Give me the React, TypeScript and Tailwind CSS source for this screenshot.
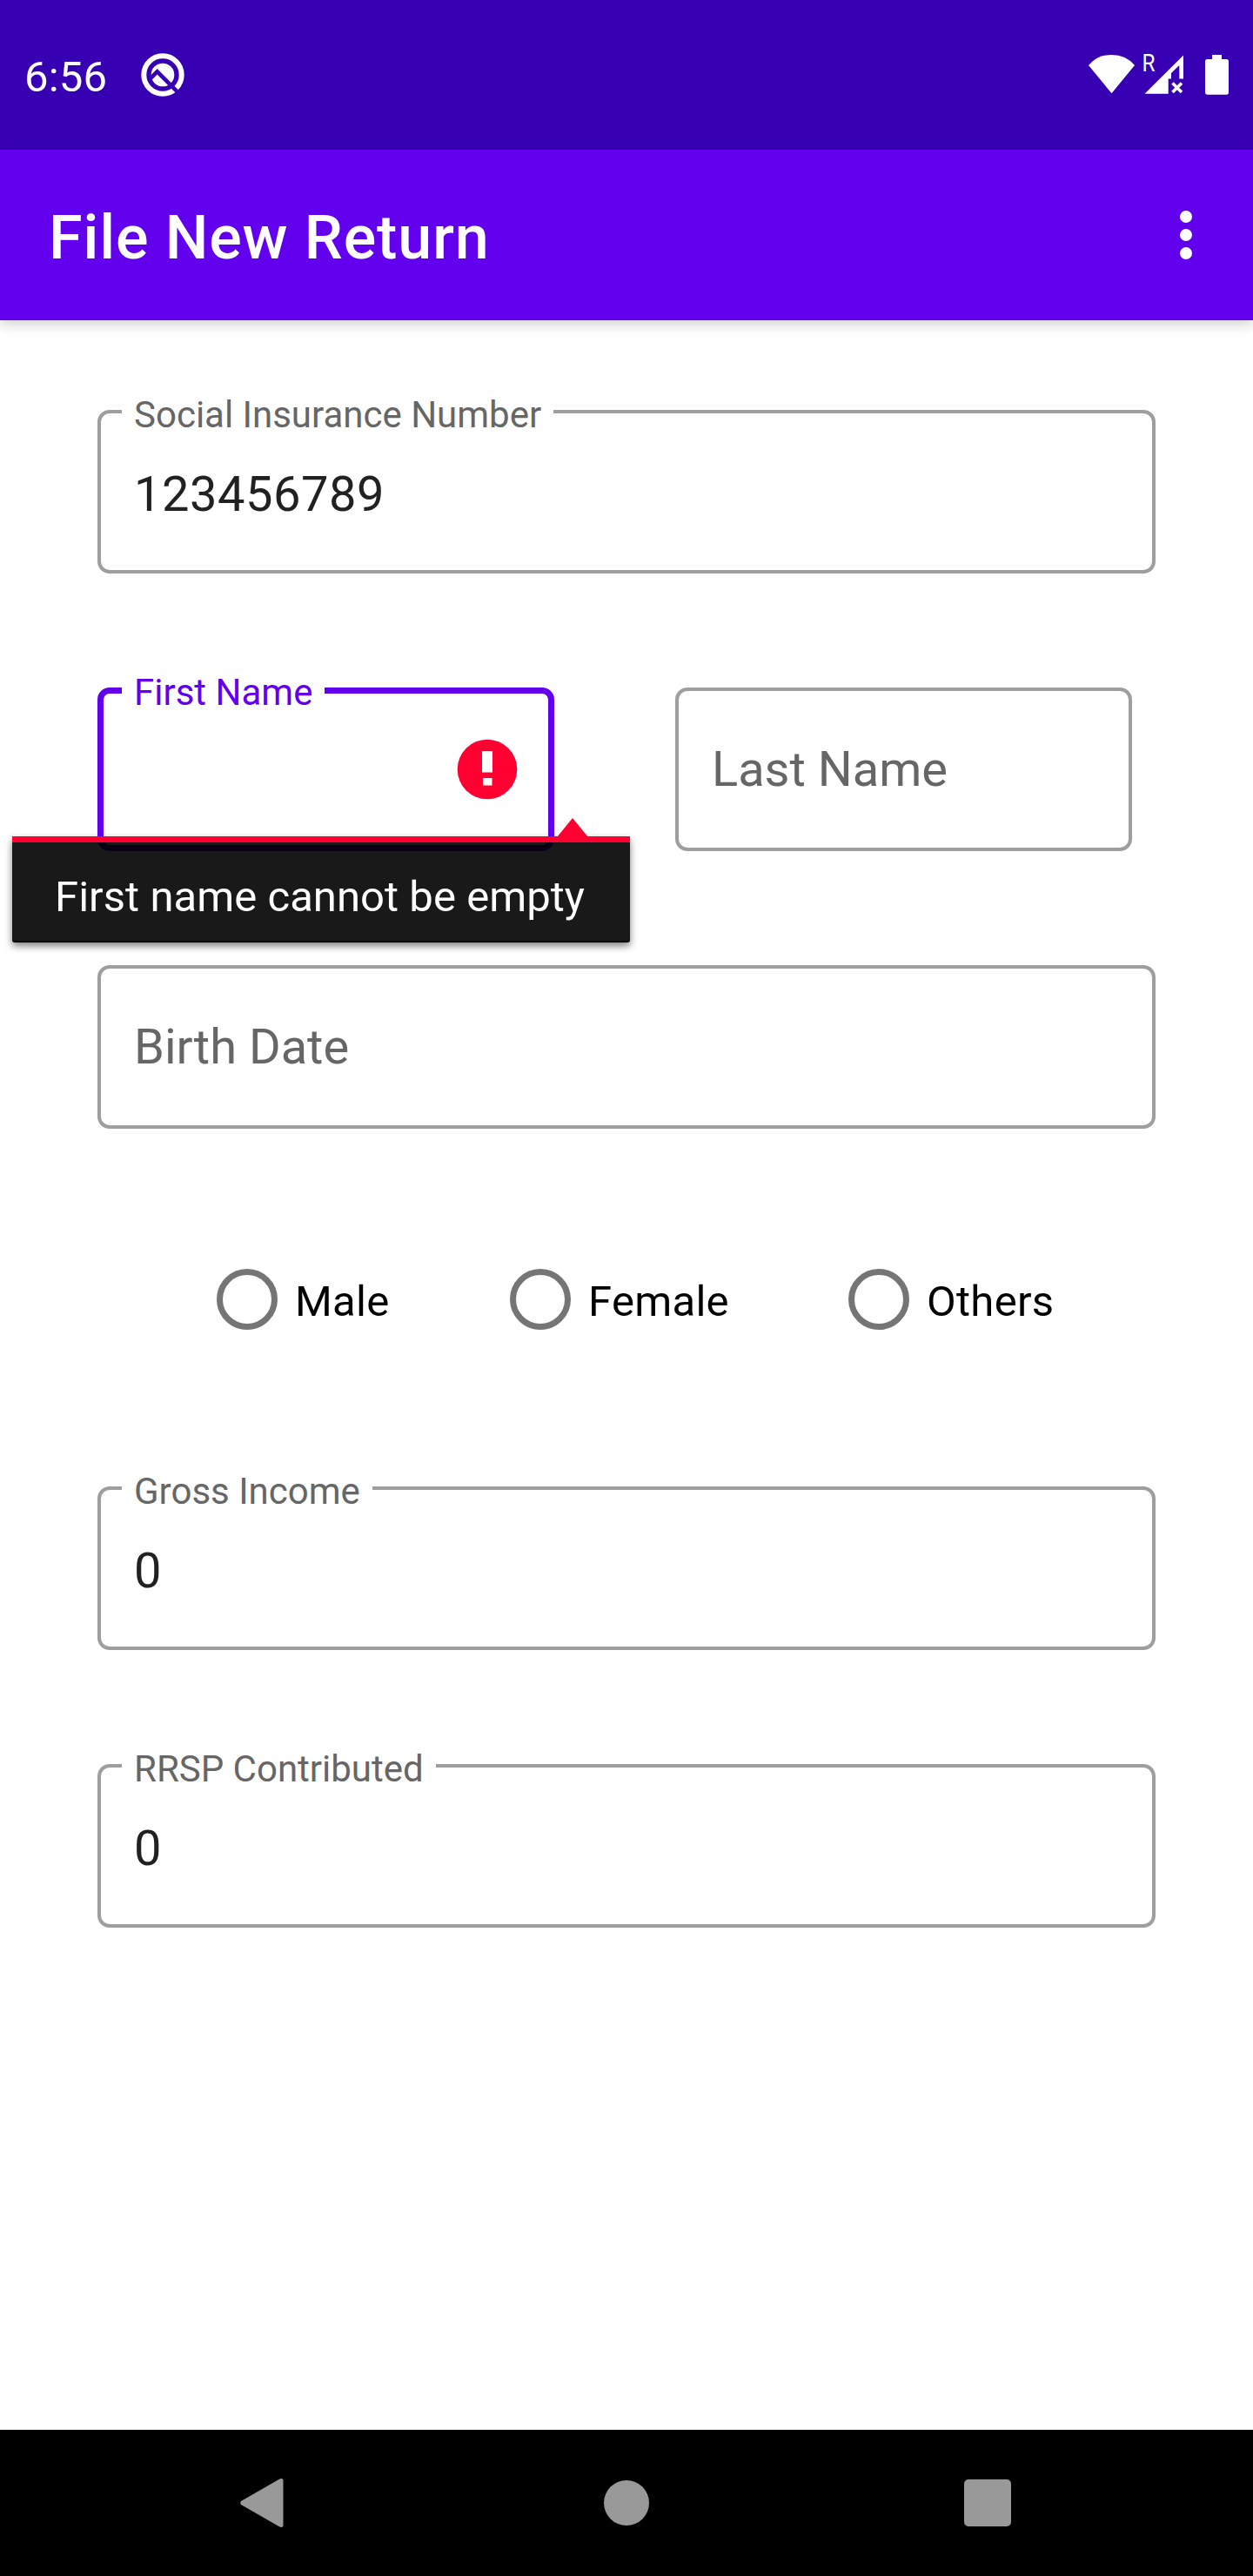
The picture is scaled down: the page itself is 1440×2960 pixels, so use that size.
import React from 'react';

type FieldProps = {
  label: string;
  value?: string;
  focused?: boolean;
  className?: string;
  children?: React.ReactNode;
};

/* Outlined text field: a fieldset leaves the notch in its border for the floating label. */
function Field({ label, value, focused, className = '', children }: FieldProps) {
  const floating = focused || value !== undefined;
  return (
    <div className={'relative h-[188px] ' + className}>
      <fieldset
        className={
          'absolute inset-x-0 bottom-0 rounded-[14px] ' +
          (focused ? 'border-[7px] border-[#6200ee] pl-[21px] ' : 'border-4 border-[#9e9e9e] pl-[24px] ') +
          (floating ? (focused ? 'top-[-21px]' : 'top-[-23px]') : 'top-0')
        }
      >
        {floating && (
          <legend
            className={
              'h-[49px] px-[14px] text-[42px] leading-[49px] whitespace-nowrap ' +
              (focused ? 'text-[#6200ee]' : 'text-[#666666]')
            }
          >
            <span className={'relative ' + (focused ? 'top-[2px]' : 'top-[4px]')}>{label}</span>
          </legend>
        )}
      </fieldset>
      <div
        className={
          'flex h-full items-center pl-[42px] text-[56px] leading-[66px] ' +
          (value !== undefined ? 'pt-[6px] tracking-[0.525px] text-[#212121]' : 'text-[#666666]')
        }
      >
        {value !== undefined ? value : floating ? '' : label}
      </div>
      {children}
    </div>
  );
}

function Radio({ label, className = '' }: { label: string; className?: string }) {
  return (
    <div className={'flex items-center ' + className}>
      <span className="h-[70px] w-[70px] shrink-0 rounded-full border-[7px] border-[#757575]" />
      <span className="pt-[5px] pl-[20px] text-[49px] leading-[58px] tracking-[0.3px] whitespace-nowrap text-black">
        {label}
      </span>
    </div>
  );
}

export default function App() {
  return (
    <div className="flex h-[2960px] w-[1440px] flex-col overflow-hidden bg-white font-['Roboto',sans-serif]">
      <header className="flex h-[172px] shrink-0 items-center bg-[#3700b3] pr-[28px] pl-[28px] text-white">
        <span className="w-[97px] pt-[5px] text-[49px] leading-[58px] tracking-[0.2px]">6:56</span>
        <svg className="ml-[36px] h-[52px] w-[52px]" viewBox="0 0 52 52" fill="none">
          <circle cx="26" cy="26" r="21.700" stroke="white" strokeWidth="6" />
          <circle cx="26" cy="26" r="13.300" fill="white" />
          <path d="M11.500 30.500 L19.700 22.300 L48 50.600" stroke="#3700b3" strokeWidth="4.600" />
        </svg>
        <svg className="ml-auto h-[70px] w-[161px]" viewBox="1251 51 161 70" fill="white">
          <path d="M1251 75 Q1261 63 1277.500 63 Q1294 63 1304 75 L1277.500 107.300 Z" />
          <text x="1312.500" y="82" fontSize="28" textLength="15" lengthAdjust="spacingAndGlyphs">
            R
          </text>
          <path fillRule="evenodd" d="M1360 63.500 V90.500 H1355.300 V75 L1346 84 V90.500 H1342.700 V107.700 H1315.500 Z" />
          <path d="M1347.500 95.500 L1358 106 M1358 95.500 L1347.500 106" stroke="white" strokeWidth="3.600" />
          <path d="M1393 63 H1404 V68 H1409.500 Q1412 68 1412 70.500 V106 Q1412 108.700 1409.500 108.700 H1387.500 Q1385 108.700 1385 106 V70.500 Q1385 68 1387.500 68 H1393 Z" />
        </svg>
      </header>

      <div className="relative flex h-[196px] shrink-0 items-center justify-between bg-[#6200ee] pr-[70px] pl-[56px] text-white shadow-[0_5px_14px_rgba(0,0,0,0.18)]">
        <h1 className="pt-[6px] text-[70px] leading-[82px] font-medium tracking-[0.9px]">File New Return</h1>
        <div className="flex flex-col gap-[7px]">
          <span className="h-[14px] w-[14px] rounded-full bg-white" />
          <span className="h-[14px] w-[14px] rounded-full bg-white" />
          <span className="h-[14px] w-[14px] rounded-full bg-white" />
        </div>
      </div>

      <main className="flex flex-1 flex-col px-[112px] pt-[103px]">
        <Field label="Social Insurance Number" value="123456789" />
        <div className="mt-[131px] flex gap-[139px]">
          <Field label="First Name" focused className="w-[525px]">
            <svg className="absolute top-[59px] left-[413px] h-[70px] w-[70px]" viewBox="0 0 70 70">
              <circle cx="35" cy="35" r="34.300" fill="#ff0031" />
              <path d="M29 14 H41 V38.500 H29 Z M30 45 H40.500 V53.500 H30 Z" fill="white" />
            </svg>
            <div className="absolute top-[171px] left-[-98px] z-10 w-[710px]">
              <svg className="absolute top-[-21px] left-[626px] h-[22px] w-[36px]" viewBox="0 0 36 22">
                <path d="M18 0 L36 22 H0 Z" fill="#ff0031" />
              </svg>
              <div className="h-[122px] rounded-b-[3px] border-t-[7px] border-[#ff0031] bg-black/90 bg-clip-padding pt-[34px] pl-[49px] text-[49px] leading-[58px] tracking-[0.05px] whitespace-nowrap text-white shadow-[0_4px_9px_rgba(0,0,0,0.5),inset_0_-2px_0_rgba(0,0,0,0.5)]">
                First name cannot be empty
              </div>
            </div>
          </Field>
          <Field label="Last Name" className="w-[525px]" />
        </div>
        <Field label="Birth Date" className="mt-[131px]" />
        <div className="mt-[161px] flex h-[70px] pl-[137px]">
          <Radio label="Male" className="w-[337px]" />
          <Radio label="Female" className="w-[389px]" />
          <Radio label="Others" />
        </div>
        <Field label="Gross Income" value="0" className="mt-[180px]" />
        <Field label="RRSP Contributed" value="0" className="mt-[131px]" />
      </main>

      <nav className="flex h-[168px] shrink-0 items-center bg-black pl-[276px]">
        <svg className="h-[58px] w-[50px]" viewBox="0 0 50 58" fill="#999999">
          <path d="M1 27 L44.500 2 Q49.500 -0.500 49.500 4 V54 Q49.500 58.500 44.500 56 L1 31 Q-0.500 29 1 27 Z" />
        </svg>
        <span className="ml-[368px] h-[52px] w-[52px] rounded-full bg-[#999999]" />
        <span className="ml-[362px] h-[54px] w-[54px] rounded-[5px] bg-[#999999]" />
      </nav>
    </div>
  );
}
